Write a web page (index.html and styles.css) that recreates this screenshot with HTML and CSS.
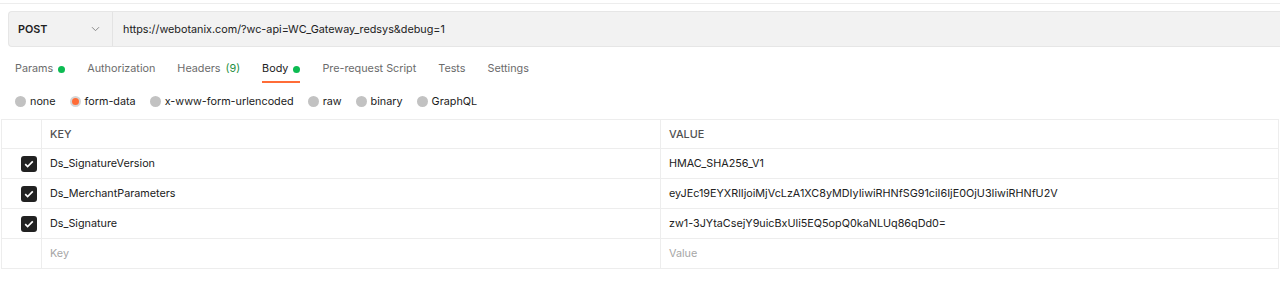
FILE: index.html
```html
<!DOCTYPE html>
<html lang="en">
<head>
    <meta charset="UTF-8">
    <title>Request</title>
    <link rel="stylesheet" href="styles.css">
</head>
<body>
    <div class="top-line"></div>
    <div class="request-bar">
        <div class="method">
            <span>POST</span>
            <svg class="chevron" width="9" height="6" viewBox="0 0 9 6"><path d="M1 1.2l3.5 3.5 3.5-3.5" fill="none" stroke="#8a8a8a" stroke-width="1"/></svg>
        </div>
        <div class="url">https://webotanix.com/?wc-api=WC_Gateway_redsys&amp;debug=1</div>
    </div>
    <div class="tabs">
        <div class="tab">Params <span class="dot"></span></div>
        <div class="tab">Authorization</div>
        <div class="tab">Headers <span class="count">(9)</span></div>
        <div class="tab active">Body <span class="dot"></span></div>
        <div class="tab">Pre-request Script</div>
        <div class="tab">Tests</div>
        <div class="tab">Settings</div>
    </div>
    <div class="body-types">
        <label class="radio"><span class="circle"></span>none</label>
        <label class="radio checked"><span class="circle"></span>form-data</label>
        <label class="radio"><span class="circle"></span>x-www-form-urlencoded</label>
        <label class="radio"><span class="circle"></span>raw</label>
        <label class="radio"><span class="circle"></span>binary</label>
        <label class="radio"><span class="circle"></span>GraphQL</label>
    </div>
    <div class="table">
        <div class="row head">
            <div class="cell check"></div>
            <div class="cell key">KEY</div>
            <div class="cell value">VALUE</div>
        </div>
        <div class="row">
            <div class="cell check"><span class="box"><svg width="10" height="8" viewBox="0 0 10 8"><path d="M1.2 4.2l2.4 2.3L8.8 1.4" fill="none" stroke="#fff" stroke-width="1.7"/></svg></span></div>
            <div class="cell key">Ds_SignatureVersion</div>
            <div class="cell value">HMAC_SHA256_V1</div>
        </div>
        <div class="row">
            <div class="cell check"><span class="box"><svg width="10" height="8" viewBox="0 0 10 8"><path d="M1.2 4.2l2.4 2.3L8.8 1.4" fill="none" stroke="#fff" stroke-width="1.7"/></svg></span></div>
            <div class="cell key">Ds_MerchantParameters</div>
            <div class="cell value">eyJEc19EYXRlIjoiMjVcLzA1XC8yMDIyIiwiRHNfSG91ciI6IjE0OjU3IiwiRHNfU2V</div>
        </div>
        <div class="row">
            <div class="cell check"><span class="box"><svg width="10" height="8" viewBox="0 0 10 8"><path d="M1.2 4.2l2.4 2.3L8.8 1.4" fill="none" stroke="#fff" stroke-width="1.7"/></svg></span></div>
            <div class="cell key">Ds_Signature</div>
            <div class="cell value">zw1-3JYtaCsejY9uicBxUli5EQ5opQ0kaNLUq86qDd0=</div>
        </div>
        <div class="row">
            <div class="cell check"></div>
            <div class="cell key placeholder">Key</div>
            <div class="cell value placeholder">Value</div>
        </div>
    </div>
</body>
</html>
```

FILE: styles.css
```css
* {
    box-sizing: border-box;
    margin: 0;
    padding: 0;
}

body {
    font-family: Inter, "Open Sans", sans-serif;
    font-size: 10.8px;
    color: #212121;
    background: #fff;
    overflow: hidden;
}

.top-line {
    height: 4px;
    border-bottom: 1px solid #ededed;
}

.request-bar {
    display: flex;
    height: 36px;
    margin: 7px 0 0 8px;
    background: #f2f2f2;
    border: 1px solid #e6e6e6;
    border-right: none;
    border-radius: 4px 0 0 4px;
}

.method {
    display: flex;
    align-items: center;
    justify-content: space-between;
    width: 104px;
    padding: 0 12px 0 9px;
    border-right: 1px solid #e3e3e3;
    font-weight: 600;
}

.url {
    display: flex;
    align-items: center;
    padding-left: 10px;
}

.tabs {
    display: flex;
    gap: 22px;
    padding: 15px 0 0 15px;
    height: 36px;
}

.tab {
    display: flex;
    align-items: flex-start;
    gap: 5px;
    height: 21px;
    color: #6b6b6b;
}

.tab.active {
    color: #212121;
    border-bottom: 2px solid #ff6c37;
}

.dot {
    width: 7px;
    height: 7px;
    margin-top: 4px;
    border-radius: 50%;
    background: #0cbb52;
}

.count {
    color: #1f8f3f;
}

.body-types {
    display: flex;
    gap: 14px;
    padding: 10px 0 0 15px;
    height: 36px;
}

.radio {
    display: flex;
    align-items: center;
    gap: 4px;
    height: 16px;
}

.circle {
    width: 11px;
    height: 11px;
    border-radius: 50%;
    background: #c2c2c2;
}

.radio.checked .circle {
    background: #ff6c37;
    border: 2px solid #d6d6d6;
}

.table {
    margin: 0 1px 0 1px;
    border-top: 1px solid #ededed;
    border-left: 1px solid #ededed;
    border-right: 1px solid #ededed;
}

.row {
    display: flex;
    height: 30px;
    border-bottom: 1px solid #ededed;
}

.row.head {
    height: 29px;
    color: #505050;
    font-weight: 500;
}

.cell {
    display: flex;
    align-items: center;
}

.check {
    width: 40px;
    padding-left: 19px;
    border-right: 1px solid #ededed;
}

.key {
    width: 619px;
    padding-left: 8px;
    border-right: 1px solid #ededed;
}

.value {
    flex: 1;
    padding-left: 8px;
}

.box {
    display: flex;
    align-items: center;
    justify-content: center;
    width: 16px;
    height: 16px;
    border-radius: 3px;
    background: #212121;
}

.placeholder {
    color: #a6a6a6;
}
```
